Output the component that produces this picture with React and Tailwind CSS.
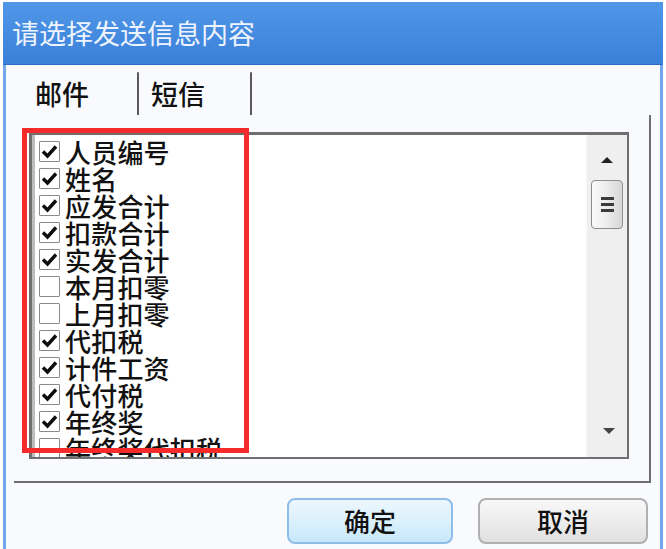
import React from 'react';

const FONT = { fontFamily: '"Noto Sans CJK SC", "Microsoft YaHei", sans-serif' };

const fields = [
  { label: '人员编号', checked: true },
  { label: '姓名', checked: true },
  { label: '应发合计', checked: true },
  { label: '扣款合计', checked: true },
  { label: '实发合计', checked: true },
  { label: '本月扣零', checked: false },
  { label: '上月扣零', checked: false },
  { label: '代扣税', checked: true },
  { label: '计件工资', checked: true },
  { label: '代付税', checked: true },
  { label: '年终奖', checked: true },
  { label: '年终奖代扣税', checked: false },
];

function CheckBox({ checked }) {
  return (
    <div className="w-[21px] h-[21px] shrink-0 border border-[#8a8a8a] rounded-[1px] bg-white flex items-center justify-center">
      {checked && (
        <svg width="17" height="15" viewBox="0 0 17 15">
          <path d="M2 7.5 L6.5 12 L15 2.5" fill="none" stroke="#0d0d0d" strokeWidth="3.4" />
        </svg>
      )}
    </div>
  );
}

function ScrollBar() {
  return (
    <div className="w-[41px] h-full bg-[#efefef] border-l border-[#f8f8f8] flex flex-col items-center">
      <div className="h-[45px] w-full flex items-center justify-center pt-[4px]">
        <svg width="14" height="8" viewBox="0 0 14 8">
          <path d="M1 7 L7 1 L13 7 Z" fill="#222" />
        </svg>
      </div>
      <div className="w-[32px] h-[49px] rounded-[4px] border border-[#8e8e8e] bg-gradient-to-r from-[#fafafa] via-[#ececec] to-[#d6d6d6] flex flex-col items-center justify-center gap-[3px]">
        <div className="w-[13px] h-[3px] bg-[#3c3c3c]" />
        <div className="w-[13px] h-[3px] bg-[#3c3c3c]" />
        <div className="w-[13px] h-[3px] bg-[#3c3c3c]" />
      </div>
      <div className="flex-1" />
      <div className="h-[45px] w-full flex items-center justify-center pb-[8px] pl-[3px]">
        <svg width="14" height="8" viewBox="0 0 14 8">
          <path d="M1 1 L13 1 L7 7 Z" fill="#444" />
        </svg>
      </div>
    </div>
  );
}

export default function App() {
  return (
    <div className="w-[666px] h-[549px] bg-white pt-[2px] pl-[3px] overflow-hidden" style={FONT}>
      <div className="w-[660px] h-[547px] flex flex-col relative">
        {/* Title bar */}
        <div className="h-[63px] shrink-0 bg-gradient-to-b from-[#5097e8] to-[#3b80d9] border-b border-[#2e6cc4] flex items-center pl-[9px] pb-[2px]">
          <span className="text-[27px] leading-none text-[#eef4fd]">请选择发送信息内容</span>
        </div>

        {/* Body */}
        <div className="flex-1 bg-[#f9fafe] border-l-[3px] border-r-[3px] border-[#72a7ea] flex flex-col">
          {/* Tabs */}
          <div className="h-[50px] shrink-0 flex">
            <div className="w-[131px] pl-[29px] pt-[14px]">
              <span className="text-[27px] leading-[30px] font-medium text-[#111]">邮件</span>
            </div>
            <div className="w-[2px] h-[43px] self-end bg-[#5a5a5a] rounded-t-full" />
            <div className="w-[111px] pl-[12px] pt-[14px]">
              <span className="text-[27px] leading-[30px] font-medium text-[#111]">短信</span>
            </div>
            <div className="w-[2px] h-[43px] self-end bg-[#5a5a5a] rounded-t-full" />
          </div>

          {/* Tab panel */}
          <div className="ml-[8px] w-[637px] h-[368px] shrink-0 border-r-2 border-b-2 border-[#6e6e6e] pl-[15px] pt-[17px]">
            <div className="w-[600px] h-[327px] border-t-[3px] border-l-[3px] border-r-2 border-b-2 border-[#6f6f6f] flex bg-white">
              <div className="flex-1 h-full border-l-[3px] border-[#bdbdbd] overflow-hidden pt-[3px] pl-[4px]">
                {fields.map((f) => (
                  <div key={f.label} className="h-[27px] flex items-center">
                    <CheckBox checked={f.checked} />
                    <span className="ml-[5px] text-[26px] leading-[27px] font-medium tracking-[0.2px] text-[#111] whitespace-nowrap">
                      {f.label}
                    </span>
                  </div>
                ))}
              </div>
              <ScrollBar />
            </div>
          </div>

          {/* Buttons */}
          <div className="flex justify-end gap-[25px] pr-[12px] pt-[15px]">
            <button className="w-[166px] h-[46px] rounded-[8px] border-2 border-[#8fbdea] bg-gradient-to-b from-[#ecf7fd] via-[#dcf1fc] to-[#c6e8fb] text-[26px] leading-none font-medium text-[#111]">
              确定
            </button>
            <button className="w-[170px] h-[46px] rounded-[8px] border-2 border-[#b0b0b0] bg-gradient-to-b from-[#f8f8f8] via-[#ededed] to-[#e0e0e0] text-[26px] leading-none font-medium text-[#111]">
              取消
            </button>
          </div>
        </div>

        {/* Red annotation frame */}
        <div className="absolute left-[19px] top-[126px] w-[227px] h-[325px] border-[5px] border-[#f52a2a] pointer-events-none" />
      </div>
    </div>
  );
}
